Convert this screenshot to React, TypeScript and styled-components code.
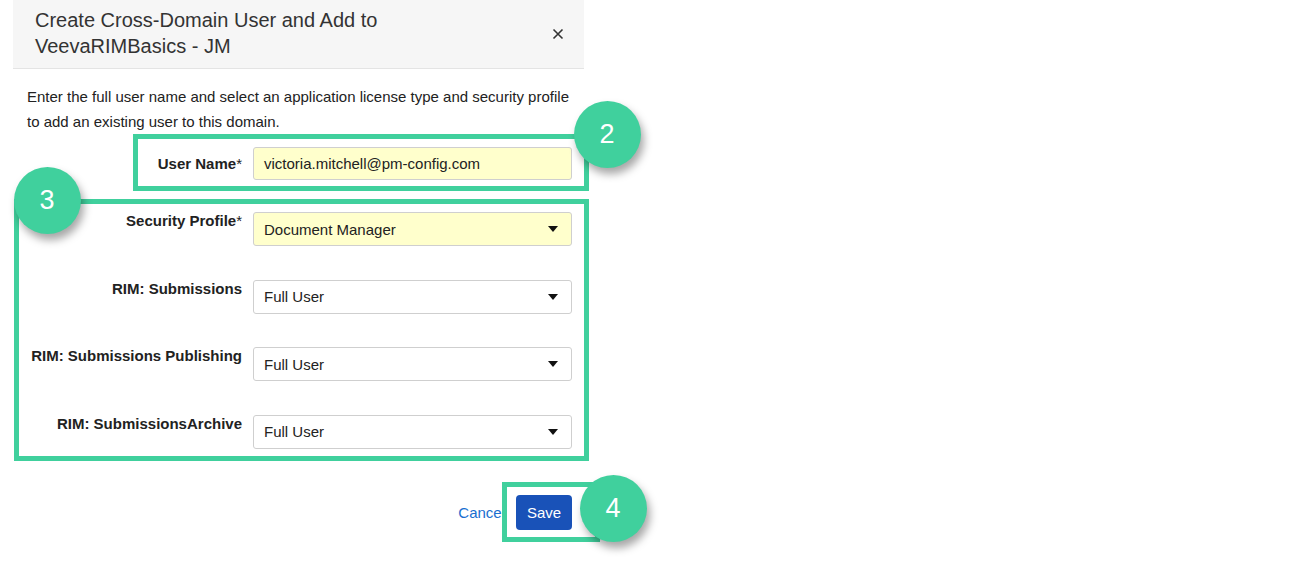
import React from "react";
import styled, { createGlobalStyle } from "styled-components";

const GlobalStyle = createGlobalStyle`
  html, body {
    margin: 0;
    padding: 0;
    background: #ffffff;
  }
  body {
    font-family: "Liberation Sans", Arial, sans-serif;
    color: #333333;
  }
`;

const GREEN = "#40d09d";

const Page = styled.div`
  padding-left: 13px;
  width: 1300px;
  height: 587px;
  box-sizing: border-box;
`;

const Dialog = styled.div`
  width: 571px;
`;

const Header = styled.div`
  height: 69px;
  box-sizing: border-box;
  background: #f6f6f6;
  border-bottom: 1px solid #e4e4e4;
  padding: 7px 0 0 22px;
  display: flex;
  align-items: flex-start;
  justify-content: space-between;
`;

const Title = styled.h2`
  margin: 0;
  font-size: 20px;
  line-height: 26px;
  font-weight: normal;
  color: #333333;
`;

const CloseButton = styled.button`
  border: none;
  background: transparent;
  padding: 0;
  margin: 20px 19px 0 0;
  width: 14px;
  height: 14px;
  display: flex;
  align-items: center;
  justify-content: center;
  cursor: pointer;
`;

const Intro = styled.p`
  margin: 0;
  padding: 15px 10px 0 14px;
  font-size: 15px;
  line-height: 25px;
  color: #222222;
`;

const Frame = styled.div<{ $left: number; $width: number }>`
  position: relative;
  margin-left: ${(p) => p.$left}px;
  width: ${(p) => p.$width}px;
  box-sizing: border-box;
  border: 5px solid ${GREEN};
`;

const UserFrame = styled(Frame)`
  padding: 8px 11px 6px 0;
`;

const ProfileFrame = styled(Frame)`
  margin-top: 8px;
  padding: 8px 11px 7px 0;
  display: flex;
  flex-direction: column;
  gap: 33.5px;
`;

const Row = styled.div<{ $labelWidth: number; $center?: boolean }>`
  display: grid;
  grid-template-columns: ${(p) => p.$labelWidth}px 319px;
  column-gap: 11px;
  align-items: ${(p) => (p.$center ? "center" : "start")};
`;

const Label = styled.label`
  text-align: right;
  font-size: 15px;
  line-height: 18px;
  font-weight: bold;
  color: #222222;
  white-space: nowrap;
`;

const Star = styled.span`
  font-weight: normal;
`;

const TextInput = styled.div`
  height: 33px;
  box-sizing: border-box;
  border: 1px solid #cfcfcf;
  border-radius: 3px;
  background: #ffffcc;
  padding: 0 10px;
  font-size: 15px;
  display: flex;
  align-items: center;
  color: #222222;
`;

const Select = styled.div<{ $required?: boolean }>`
  height: 34px;
  box-sizing: border-box;
  border: 1px solid #cfcfcf;
  border-radius: 3px;
  background: ${(p) => (p.$required ? "#ffffcc" : "#ffffff")};
  padding: 0 13px 0 10px;
  font-size: 15px;
  display: flex;
  align-items: center;
  justify-content: space-between;
  color: #222222;
`;

const Caret = styled.span`
  width: 0;
  height: 0;
  border-left: 5.5px solid transparent;
  border-right: 5.5px solid transparent;
  border-top: 6px solid #111111;
`;

const Footer = styled.div`
  margin-top: 21px;
  display: flex;
  justify-content: flex-end;
  align-items: center;
  padding-right: 12px;
`;

const CancelLink = styled.a`
  font-size: 15px;
  color: #1a6fd0;
  text-decoration: none;
  margin-right: -3px;
  margin-top: 2px;
  cursor: pointer;
`;

const SaveFrame = styled.div`
  position: relative;
  z-index: 1;
  border: 5px solid ${GREEN};
  padding: 8px 23px 7px 9px;
  margin-right: -28px;
`;

const SaveButton = styled.button`
  width: 56px;
  height: 35px;
  border: none;
  border-radius: 4px;
  background: #1952b8;
  color: #ffffff;
  font-family: "Liberation Sans", Arial, sans-serif;
  font-size: 15px;
  cursor: pointer;
  display: block;
`;

const Badge = styled.div<{ $x: number; $y: number }>`
  position: absolute;
  left: ${(p) => p.$x}px;
  top: ${(p) => p.$y}px;
  width: 67px;
  height: 67px;
  border-radius: 50%;
  background: ${GREEN};
  color: #ffffff;
  font-size: 27px;
  display: flex;
  align-items: center;
  justify-content: center;
  box-shadow: 3px 6px 8px rgba(0, 0, 0, 0.35);
  z-index: 2;
`;

const licenses = [
  "RIM: Submissions",
  "RIM: Submissions Publishing",
  "RIM: SubmissionsArchive",
];

export default function App() {
  return (
    <Page>
      <GlobalStyle />
      <Dialog>
        <Header>
          <Title>
            Create Cross-Domain User and Add to
            <br />
            VeevaRIMBasics - JM
          </Title>
          <CloseButton aria-label="Close">
            <svg width="12" height="12" viewBox="0 0 12 12">
              <path
                d="M1.5 1.5 L10.5 10.5 M10.5 1.5 L1.5 10.5"
                stroke="#333333"
                strokeWidth="1.6"
              />
            </svg>
          </CloseButton>
        </Header>

        <Intro>
          Enter the full user name and select an application license type and
          security profile to add an existing user to this domain.
        </Intro>

        <UserFrame $left={120} $width={456}>
          <Row $labelWidth={104} $center>
            <Label>
              User Name<Star>*</Star>
            </Label>
            <TextInput>victoria.mitchell@pm-config.com</TextInput>
          </Row>
          <Badge $x={435.5} $y={-38.5}>2</Badge>
        </UserFrame>

        <ProfileFrame $left={1} $width={575}>
          <Row $labelWidth={223}>
            <Label>
              Security Profile<Star>*</Star>
            </Label>
            <Select $required>
              Document Manager
              <Caret />
            </Select>
          </Row>
          {licenses.map((name) => (
            <Row key={name} $labelWidth={223}>
              <Label>{name}</Label>
              <Select>
                Full User
                <Caret />
              </Select>
            </Row>
          ))}
          <Badge $x={-5.5} $y={-37.5}>3</Badge>
        </ProfileFrame>

        <Footer>
          <CancelLink>Cancel</CancelLink>
          <SaveFrame>
            <SaveButton>Save</SaveButton>
            <Badge $x={72.5} $y={-11.5}>4</Badge>
          </SaveFrame>
        </Footer>
      </Dialog>
    </Page>
  );
}
